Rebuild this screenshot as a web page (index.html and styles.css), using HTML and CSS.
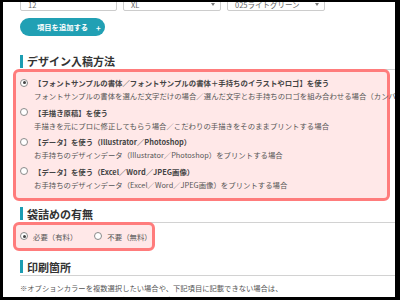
FILE: index.html
```html
<!DOCTYPE html>
<html lang="ja">
<head>
    <meta charset="UTF-8">
    <meta name="viewport" content="width=device-width, initial-scale=1.0">
    <title>デザイン入稿方法</title>
    <link rel="stylesheet" href="styles.css">
</head>
<body>

    <div class="frame">

        <!-- 前の行の入力欄 -->
        <div class="top-row">
            <div class="field">12</div>
            <div class="field select">XL</div>
            <div class="field select">025ライトグリーン</div>
        </div>

        <button class="add-button">項目を追加する<span class="plus">+</span></button>

        <h2 class="section-title first">デザイン入稿方法</h2>
        <div class="choice-box">
            <div class="choice">
                <span class="radio checked"></span>
                <div class="choice-text">
                    <p class="choice-title">【フォントサンプルの書体／フォントサンプルの書体＋手持ちのイラストやロゴ】を使う</p>
                    <p class="choice-sub">フォントサンプルの書体を選んだ文字だけの場合／選んだ文字とお手持ちのロゴを組み合わせる場合（カンバン）</p>
                </div>
            </div>
            <div class="choice">
                <span class="radio"></span>
                <div class="choice-text">
                    <p class="choice-title">【手描き原稿】を使う</p>
                    <p class="choice-sub">手描きを元にプロに修正してもらう場合／こだわりの手描きをそのままプリントする場合</p>
                </div>
            </div>
            <div class="choice">
                <span class="radio"></span>
                <div class="choice-text">
                    <p class="choice-title">【データ】を使う（Illustrator／Photoshop）</p>
                    <p class="choice-sub">お手持ちのデザインデータ（Illustrator／Photoshop）をプリントする場合</p>
                </div>
            </div>
            <div class="choice">
                <span class="radio"></span>
                <div class="choice-text">
                    <p class="choice-title">【データ】を使う（Excel／Word／JPEG画像）</p>
                    <p class="choice-sub">お手持ちのデザインデータ（Excel／Word／JPEG画像）をプリントする場合</p>
                </div>
            </div>
        </div>

        <h2 class="section-title">袋詰めの有無</h2>
        <div class="choice-box small">
            <label class="inline-choice"><span class="radio checked"></span>必要（有料）</label>
            <label class="inline-choice"><span class="radio"></span>不要（無料）</label>
        </div>

        <h2 class="section-title third">印刷箇所</h2>
        <p class="note">※オプションカラーを複数選択したい場合や、下記項目に記載できない場合は、</p>
        <p class="note">備考欄にご記入いただくか、お気軽にお問い合わせください。</p>

    </div>

</body>
</html>
```

FILE: styles.css
```css
/* Reset */
* {
    margin: 0;
    padding: 0;
    box-sizing: border-box;
}

body {
    background-color: #000;
    font-family: "Noto Sans CJK JP", "Noto Sans", sans-serif;
    color: #333;
}

.frame {
    margin: 2px 5px 0 3px;
    height: 295px;
    background-color: #fff;
    padding-left: 17px;
    overflow: hidden;
}

/* 上の入力欄 */
.top-row {
    display: flex;
    gap: 6px;
    margin-top: -13px;
}

.field {
    width: 97px;
    height: 22px;
    border: 1px solid #ccc;
    border-radius: 2px;
    font-size: 7.5px;
    line-height: 11px;
    color: #666;
    padding: 9px 7px 0;
    position: relative;
}

.field.select {
    width: 98px;
}

.field.select::after {
    content: "";
    position: absolute;
    right: 5px;
    top: 13px;
    border-left: 2.5px solid transparent;
    border-right: 2.5px solid transparent;
    border-top: 3px solid #777;
}

.add-button {
    display: flex;
    align-items: center;
    width: 85px;
    height: 18px;
    margin-top: 7px;
    padding-left: 17px;
    border: none;
    border-radius: 9px;
    background-color: #21a0b4;
    color: #fff;
    font-family: inherit;
    font-size: 7.3px;
    font-weight: bold;
}

.plus {
    margin-left: 8px;
    font-size: 8px;
}

/* 見出し */
.section-title {
    display: flex;
    align-items: center;
    height: 17px;
    margin-top: 5px;
    font-size: 11px;
    line-height: 16px;
    font-weight: bold;
    color: #333;
    border-bottom: 1px solid #d2d2d2;
}

.section-title::before {
    content: "";
    width: 3px;
    height: 13px;
    margin-right: 4px;
    background-color: #1c9db2;
}

.section-title.first {
    margin-top: 17px;
}

.section-title.third {
    margin-top: 8px;
}

/* 赤い枠の選択肢 */
.choice-box {
    width: 377px;
    margin-left: -7px;
    margin-top: -1px;
    padding: 4px 0 7px 4px;
    border: 3px solid #ff7c7c;
    border-radius: 6px;
    background-color: #ffe8e8;
}

.choice {
    display: flex;
    align-items: flex-start;
    gap: 6px;
    margin-bottom: 3.5px;
}

.choice:last-child {
    margin-bottom: 0;
}

.choice-text {
    white-space: nowrap;
    font-size: 7.4px;
    line-height: 13px;
}

.choice-title {
    font-weight: bold;
    color: #444;
}

.choice-sub {
    color: #555;
}

.radio {
    flex-shrink: 0;
    width: 8px;
    height: 8px;
    margin-top: 2.5px;
    border: 1px solid #8a8a8a;
    border-radius: 50%;
    background-color: #fff;
    position: relative;
}

.radio.checked::after {
    content: "";
    position: absolute;
    left: 1.5px;
    top: 1.5px;
    width: 3px;
    height: 3px;
    border-radius: 50%;
    background-color: #444;
}

.choice-box.small {
    width: 142px;
    display: flex;
    gap: 17px;
    padding: 5px 0 5px 4px;
}

.inline-choice {
    display: flex;
    align-items: center;
    gap: 5px;
    font-size: 7.4px;
    line-height: 13px;
    color: #555;
}

.inline-choice .radio {
    margin-top: 0;
}

.note {
    margin-top: 6px;
    font-size: 7.3px;
    line-height: 12px;
    color: #555;
    white-space: nowrap;
}

.note + .note {
    margin-top: 0;
}
```
